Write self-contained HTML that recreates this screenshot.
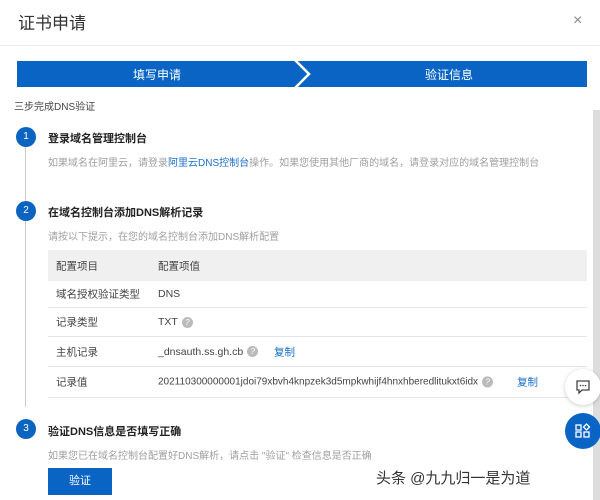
<!DOCTYPE html>
<html><head><meta charset="utf-8"><style>
*{margin:0;padding:0;box-sizing:border-box}
body{width:600px;height:500px;overflow:hidden;background:#fff;font-family:"Liberation Sans","Noto Sans CJK SC",sans-serif;position:relative;color:#333}
.a{position:absolute;white-space:nowrap}
.c{position:absolute;width:20px;height:20px;border-radius:50%;background:#0b64c0;color:#fff;font-size:10px;text-align:center;line-height:20px}
.t{font-size:11px;font-weight:bold;color:#222}
.d{font-size:10px;color:#a0a0a0}
.row{position:absolute;left:48px;width:539px;border-bottom:1px solid #e6e6e6;font-size:10.5px;color:#444}
.row span{position:absolute;top:50%;transform:translateY(-50%);white-space:nowrap}
.q{display:inline-block;width:11px;height:11px;border-radius:50%;background:#bbb;color:#fff;font-size:8px;text-align:center;line-height:11px;vertical-align:middle;margin-left:4px}
.lk{color:#1a6fc9}
</style></head><body>
<div class="a" style="left:18px;top:9px;font-size:17px;color:#333">证书申请</div>
<div class="a" style="left:573px;top:12px;font-size:16px;color:#888">×</div>
<div class="a" style="left:0;top:45px;width:600px;height:1px;background:#eee"></div>
<div class="a" style="left:17px;top:61px;width:570px;height:26px;background:#0a64c4"></div>
<svg class="a" style="left:288px;top:58px" width="28" height="32"><polyline points="6,1 21,16 6,31" fill="none" stroke="#fff" stroke-width="2.5"/></svg>
<div class="a" style="left:133px;top:66px;font-size:12px;color:#fff">填写申请</div>
<div class="a" style="left:425px;top:66px;font-size:12px;color:#fff">验证信息</div>
<div class="a" style="left:14px;top:98px;font-size:10px;color:#444">三步完成DNS验证</div>
<div class="a" style="left:593px;top:110px;width:7px;height:390px;background:#ddd"></div>
<div class="a" style="left:25px;top:147px;width:1px;height:260px;background:#ccc"></div>
<div class="c" style="left:16px;top:127px">1</div>
<div class="a t" style="left:48px;top:130px">登录域名管理控制台</div>
<div class="a d" style="left:48px;top:154px">如果域名在阿里云，请登录<span class="lk">阿里云DNS控制台</span>操作。如果您使用其他厂商的域名，请登录对应的域名管理控制台</div>
<div class="c" style="left:16px;top:201px">2</div>
<div class="a t" style="left:48px;top:204px">在域名控制台添加DNS解析记录</div>
<div class="a d" style="left:48px;top:228px">请按以下提示，在您的域名控制台添加DNS解析配置</div>
<div class="row" style="top:250px;height:31px;background:#f0f0f0;border:none"><span style="left:8px">配置项目</span><span style="left:110px">配置项值</span></div>
<div class="row" style="top:281px;height:27px"><span style="left:8px">域名授权验证类型</span><span style="left:110px">DNS</span></div>
<div class="row" style="top:308px;height:29px"><span style="left:8px">记录类型</span><span style="left:110px">TXT<i class="q">?</i></span></div>
<div class="row" style="top:337px;height:30px"><span style="left:8px">主机记录</span><span style="left:110px">_dnsauth.ss.gh.cb<i class="q">?</i></span><span class="lk" style="left:226px">复制</span></div>
<div class="row" style="top:367px;height:31px"><span style="left:8px">记录值</span><span style="left:110px;font-size:10px">202110300000001jdoi79xbvh4knpzek3d5mpkwhijf4hnxhberedlitukxt6idx<i class="q">?</i></span><span class="lk" style="left:469px">复制</span></div>
<div class="c" style="left:16px;top:419px">3</div>
<div class="a t" style="left:48px;top:423px">验证DNS信息是否填写正确</div>
<div class="a d" style="left:48px;top:447px">如果您已在域名控制台配置好DNS解析，请点击 "验证" 检查信息是否正确</div>
<div class="a" style="left:48px;top:468px;width:64px;height:27px;background:#0a64c4;color:#fff;font-size:11px;text-align:center;line-height:27px">验证</div>
<div class="a" style="left:565px;top:369px;width:36px;height:36px;border-radius:50%;background:#fff;box-shadow:0 1px 5px rgba(0,0,0,.2)"></div>
<svg class="a" style="left:575px;top:379px" width="16" height="16"><path d="M2 2h12v9H7l-3 3v-3H2z" fill="none" stroke="#444" stroke-width="1.3"/><circle cx="5.5" cy="6.5" r=".8" fill="#444"/><circle cx="8" cy="6.5" r=".8" fill="#444"/><circle cx="10.5" cy="6.5" r=".8" fill="#444"/></svg>
<div class="a" style="left:565px;top:413px;width:36px;height:36px;border-radius:50%;background:#0a64c4"></div>
<svg class="a" style="left:575px;top:423px" width="16" height="16" fill="none" stroke="#fff" stroke-width="1.3"><rect x="1" y="2" width="5" height="5"/><rect x="1" y="9" width="5" height="5"/><rect x="9" y="9" width="5" height="5"/><path d="M11.5 1l3 3-3 3-3-3z"/></svg>
<div class="a" style="left:376px;top:467px;font-size:15px;color:#333">头条 @九九归一是为道</div>
</body></html>
